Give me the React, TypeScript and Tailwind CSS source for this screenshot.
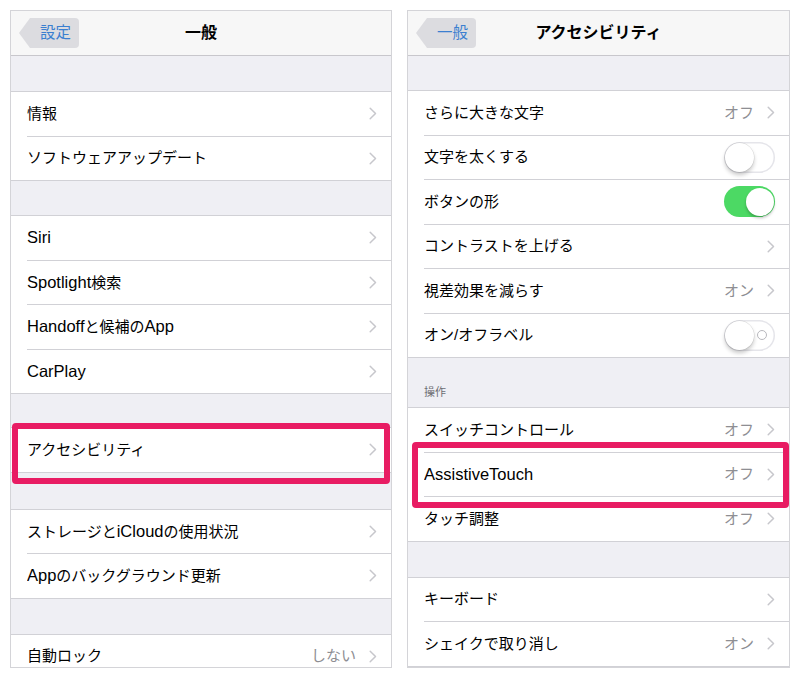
import React, { Fragment } from "react";

type Accessory = "chevron" | "off" | "on" | "offLabel";

type Row = {
  label: string;
  detail?: string;
  kind?: Accessory;
  box?: string; // classes for the pink highlight frame
};

// Latin runs render a bit larger than the kana next to them on iOS
const Label = ({ text }: { text: string }) => (
  <>
    {text.split(/([A-Za-z]+)/).map((part, i) =>
      /^[A-Za-z]+$/.test(part) ? (
        <span key={i} className="text-[16.5px]">
          {part}
        </span>
      ) : (
        <Fragment key={i}>{part}</Fragment>
      )
    )}
  </>
);

const Chevron = () => (
  <svg width="8" height="13" viewBox="0 0 8 13" fill="none">
    <path
      d="M1.2 1.2l5.3 5.3-5.3 5.3"
      stroke="#c7c7cc"
      strokeWidth="1.5"
      strokeLinecap="round"
      strokeLinejoin="round"
    />
  </svg>
);

const Toggle = ({ on, label }: { on?: boolean; label?: boolean }) => (
  <div
    className={
      on
        ? "relative h-[31px] w-[51px] rounded-full bg-[#4cd964]"
        : "relative h-[31px] w-[51px] rounded-full bg-white shadow-[inset_0_0_0_1.5px_#e5e5ea]"
    }
  >
    {label && !on && (
      <div className="absolute right-[8px] top-[10.5px] size-[10px] rounded-full border border-[#b8b8bd]" />
    )}
    <div
      className={
        on
          ? "absolute right-[1.5px] top-[1.5px] size-[28px] rounded-full bg-white shadow-[0_2px_3px_rgba(0,0,0,0.25)]"
          : "absolute left-[1px] top-[1px] size-[29px] rounded-full bg-white shadow-[0_3px_4px_rgba(0,0,0,0.22),0_0_0_0.5px_rgba(0,0,0,0.12)]"
      }
    />
  </div>
);

const RowView = ({ row }: { row: Row }) => {
  const kind = row.kind ?? "chevron";
  return (
    <div className="relative flex h-[43.5px] items-center pl-[16px] pr-[14px] text-[15px] text-black">
      <span className="flex-1 truncate">
        <Label text={row.label} />
      </span>
      {row.detail && <span className="mr-[13px] text-[#8e8e93]">{row.detail}</span>}
      {kind === "chevron" && <Chevron />}
      {kind === "off" && <Toggle />}
      {kind === "on" && <Toggle on />}
      {kind === "offLabel" && <Toggle label />}
      {row.box && (
        <div
          className={
            "pointer-events-none absolute z-10 rounded-[4px] border-[6px] border-[#e81c63] " + row.box
          }
        />
      )}
    </div>
  );
};

const Group = ({ rows }: { rows: Row[] }) => (
  <div className="border-y border-[#d1d1d6] bg-white">
    {rows.map((row, i) => (
      <Fragment key={row.label}>
        {i > 0 && <div className="ml-[16px] h-px bg-[#d1d1d6]" />}
        <RowView row={row} />
      </Fragment>
    ))}
  </div>
);

const NavBar = ({ back, title }: { back: string; title: string }) => (
  <div className="grid h-[45px] grid-cols-[1fr_auto_1fr] items-center border-b border-[#c8c7cc] bg-[#f7f7f7] px-[8px]">
    <div className="flex items-center">
      <div className="h-0 w-0 border-y-[15px] border-r-[11px] border-y-transparent border-r-[#dcdce0]" />
      <div className="flex h-[30px] w-[49px] items-center rounded-r-[4px] bg-[#dcdce0] pl-[10px] text-[15.5px] text-[#3b7fd0]">
        {back}
      </div>
    </div>
    <div className="text-[16px] font-bold text-black">{title}</div>
    <div />
  </div>
);

const Panel = ({ width, children }: { width: string; children: React.ReactNode }) => (
  <div className={"h-[658px] overflow-hidden border border-[#d4d4d8] bg-[#efeff4] " + width}>
    {children}
  </div>
);

export default function App() {
  return (
    <div className="flex h-[678px] w-[800px] items-start gap-[15px] bg-white pl-[10px] pt-[10px] font-['Liberation_Sans','Noto_Sans_CJK_JP',sans-serif]">
      <Panel width="w-[382px]">
        <NavBar back="設定" title="一般" />
        <div className="h-[35px]" />
        <Group rows={[{ label: "情報" }, { label: "ソフトウェアアップデート" }]} />
        <div className="h-[34px]" />
        <Group
          rows={[
            { label: "Siri" },
            { label: "Spotlight検索" },
            { label: "Handoffと候補のApp" },
            { label: "CarPlay" },
          ]}
        />
        <div className="h-[33px]" />
        <Group
          rows={[{ label: "アクセシビリティ", box: "-top-[5px] -bottom-[12.5px] left-[1px] right-[1px]" }]}
        />
        <div className="h-[36px]" />
        <Group
          rows={[{ label: "ストレージとiCloudの使用状況" }, { label: "Appのバックグラウンド更新" }]}
        />
        <div className="h-[35px]" />
        <Group rows={[{ label: "自動ロック", detail: "しない" }]} />
      </Panel>

      <Panel width="w-[383px]">
        <NavBar back="一般" title="アクセシビリティ" />
        <div className="h-[34px]" />
        <Group
          rows={[
            { label: "さらに大きな文字", detail: "オフ" },
            { label: "文字を太くする", kind: "off" },
            { label: "ボタンの形", kind: "on" },
            { label: "コントラストを上げる" },
            { label: "視差効果を減らす", detail: "オン" },
            { label: "オン/オフラベル", kind: "offLabel" },
          ]}
        />
        <div className="flex h-[49px] items-end pb-[7px] pl-[16px] text-[11px] text-[#6d6d72]">操作</div>
        <Group
          rows={[
            { label: "スイッチコントロール", detail: "オフ" },
            {
              label: "AssistiveTouch",
              detail: "オフ",
              box: "-top-[11px] -bottom-[11.5px] left-[4px] right-0",
            },
            { label: "タッチ調整", detail: "オフ" },
          ]}
        />
        <div className="h-[35px]" />
        <Group rows={[{ label: "キーボード" }, { label: "シェイクで取り消し", detail: "オン" }]} />
      </Panel>
    </div>
  );
}
